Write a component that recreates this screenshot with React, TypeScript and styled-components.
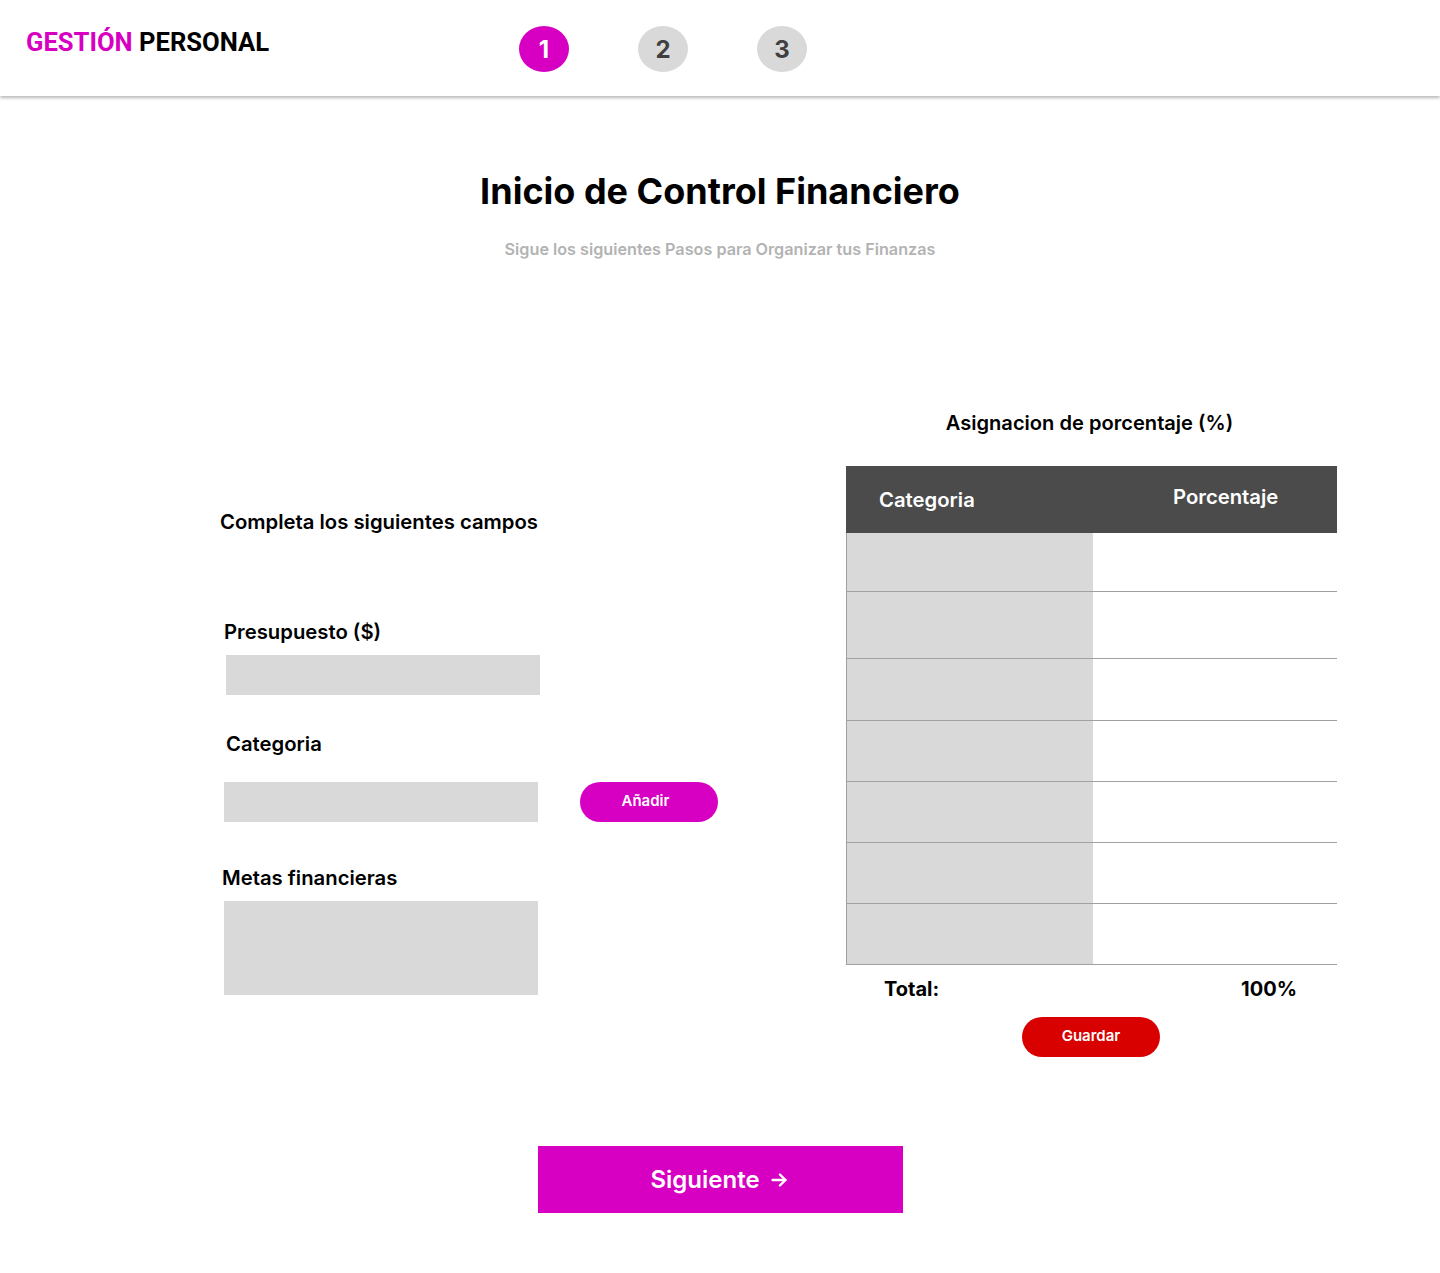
import React from "react";
import styled, { createGlobalStyle } from "styled-components";

const MAGENTA = "#d700c2";

const Global = createGlobalStyle`
  html, body { margin: 0; padding: 0; background: #ffffff; }
  body { font-family: Inter, "Noto Sans", sans-serif; color: #000; }
  * { box-sizing: border-box; }
`;

const Page = styled.div`
  width: 1440px;
  min-height: 1273px;
  display: flex;
  flex-direction: column;
  padding-bottom: 60px;
`;

const Header = styled.header`
  height: 96px;
  display: flex;
  align-items: flex-start;
  padding-left: 26px;
  box-shadow: 0 2px 3px rgba(0, 0, 0, 0.28);
  position: relative;
  z-index: 1;
`;

const Logo = styled.div`
  width: 493px;
  flex-shrink: 0;
  margin-top: 27px;
  font-family: Roboto, "Liberation Sans", sans-serif;
  font-weight: 700;
  font-size: 25.6px;
  line-height: 30px;
`;

const LogoAccent = styled.span`
  color: ${MAGENTA};
`;

const Steps = styled.div`
  display: flex;
  gap: 69px;
  margin-top: 26px;
`;

const Step = styled.div<{ $active?: boolean }>`
  width: 50px;
  height: 46px;
  border-radius: 50%;
  display: flex;
  align-items: center;
  justify-content: center;
  background: ${(p) => (p.$active ? MAGENTA : "#d9d9d9")};
  color: ${(p) => (p.$active ? "#ffffff" : "#3f3f3f")};
  font-family: Inter, sans-serif;
  font-weight: 700;
  font-size: 24px;
`;

const Intro = styled.section`
  display: flex;
  flex-direction: column;
  align-items: center;
  padding-top: 73px;
`;

const Title = styled.h1`
  margin: 0;
  font-size: 36px;
  line-height: 44px;
  font-weight: 700;
`;

const Subtitle = styled.p`
  margin: 26px 0 0;
  font-size: 16.2px;
  line-height: 20px;
  font-weight: 600;
  color: #b3b3b3;
`;

const Columns = styled.section`
  display: flex;
  align-items: flex-start;
  padding-left: 220px;
  margin-top: 152px;
`;

const FormColumn = styled.div`
  width: 626px;
  flex-shrink: 0;
  display: flex;
  flex-direction: column;
  align-items: flex-start;
  padding-top: 99px;
`;

const Label = styled.div<{ $indent?: number; $gap?: number }>`
  margin-left: ${(p) => p.$indent ?? 0}px;
  margin-top: ${(p) => p.$gap ?? 0}px;
  font-size: 20.3px;
  line-height: 24px;
  font-weight: 600;
`;

const Field = styled.div<{ $indent?: number; $height?: number; $gap?: number }>`
  margin-left: ${(p) => p.$indent ?? 0}px;
  margin-top: ${(p) => p.$gap ?? 0}px;
  width: 314px;
  height: ${(p) => p.$height ?? 40}px;
  background: #d9d9d9;
`;

const FieldRow = styled.div<{ $gap?: number }>`
  display: flex;
  align-items: center;
  gap: 42px;
  margin-top: ${(p) => p.$gap ?? 0}px;
  margin-left: 4px;
`;

const PillButton = styled.button<{ $color: string; $offsetX?: number }>`
  width: 138px;
  height: 40px;
  border: none;
  border-radius: 20px;
  background: ${(p) => p.$color};
  color: #ffffff;
  font-family: Inter, sans-serif;
  font-weight: 600;
  font-size: 15px;
  cursor: pointer;
  padding: 0 ${(p) => p.$offsetX ?? 0}px 4px 0;
`;

const TableColumn = styled.div`
  width: 491px;
  flex-shrink: 0;
  display: flex;
  flex-direction: column;
  align-items: center;
`;

const SectionHeading = styled.h2`
  margin: 0 4px 0 0;
  font-size: 20.1px;
  line-height: 24px;
  font-weight: 600;
`;

const Table = styled.div`
  width: 491px;
  margin-top: 31px;
  display: flex;
  flex-direction: column;
  border-bottom: 1px solid #a0a0a0;
`;

const HeadRow = styled.div`
  height: 67px;
  display: grid;
  grid-template-columns: 246px 245px;
  background: #4b4b4b;
  color: #ffffff;
`;

const HeadCell = styled.div<{ $pad: number; $shift?: number }>`
  display: flex;
  align-items: center;
  padding-left: ${(p) => p.$pad}px;
  padding-bottom: ${(p) => (p.$shift ?? 0) * 2}px;
  font-size: 20.3px;
  font-weight: 600;
`;

const BodyRow = styled.div<{ $height: number }>`
  height: ${(p) => p.$height}px;
  display: grid;
  grid-template-columns: 246px 245px;
  border-left: 1px solid #a0a0a0;
  border-right: 1px solid #a0a0a0;
  & + & {
    border-top: 1px solid #a0a0a0;
  }
`;

const GrayCell = styled.div`
  background: #d9d9d9;
`;

const WhiteCell = styled.div`
  background: #ffffff;
`;

const TotalRow = styled.div`
  width: 100%;
  display: flex;
  justify-content: space-between;
  padding: 0 40px 0 38px;
  margin-top: 12px;
  font-size: 20px;
  line-height: 24px;
  font-weight: 700;
`;

const SaveWrap = styled.div`
  margin: 16px 1px 0 0;
`;

const NextButton = styled.button`
  align-self: center;
  margin-top: 89px;
  width: 365px;
  height: 67px;
  border: none;
  background: ${MAGENTA};
  color: #ffffff;
  font-family: Inter, sans-serif;
  font-weight: 600;
  font-size: 24px;
  display: flex;
  align-items: center;
  justify-content: center;
  gap: 8px;
  padding: 0;
  cursor: pointer;
`;

const rowHeights = [58, 67, 62, 61, 61, 61, 61];

export default function App() {
  return (
    <>
      <Global />
      <Page>
        <Header>
          <Logo>
            <LogoAccent>GESTIÓN</LogoAccent> PERSONAL
          </Logo>
          <Steps>
            <Step $active>1</Step>
            <Step>2</Step>
            <Step>3</Step>
          </Steps>
        </Header>

        <Intro>
          <Title>Inicio de Control Financiero</Title>
          <Subtitle>Sigue los siguientes Pasos para Organizar tus Finanzas</Subtitle>
        </Intro>

        <Columns>
          <FormColumn>
            <Label>Completa los siguientes campos</Label>
            <Label $indent={4} $gap={86}>Presupuesto ($)</Label>
            <Field $indent={6} $gap={11} />
            <Label $indent={6} $gap={37}>Categoria</Label>
            <FieldRow $gap={26}>
              <Field />
              <PillButton $color={MAGENTA} $offsetX={7}>Añadir</PillButton>
            </FieldRow>
            <Label $indent={2} $gap={44}>Metas financieras</Label>
            <Field $indent={4} $gap={11} $height={94} />
          </FormColumn>

          <TableColumn>
            <SectionHeading>Asignacion de porcentaje (%)</SectionHeading>
            <Table>
              <HeadRow>
                <HeadCell $pad={33}>Categoria</HeadCell>
                <HeadCell $pad={81} $shift={3}>Porcentaje</HeadCell>
              </HeadRow>
              {rowHeights.map((h, i) => (
                <BodyRow key={i} $height={h}>
                  <GrayCell />
                  <WhiteCell />
                </BodyRow>
              ))}
            </Table>
            <TotalRow>
              <span>Total:</span>
              <span>100%</span>
            </TotalRow>
            <SaveWrap>
              <PillButton $color="#d90000">Guardar</PillButton>
            </SaveWrap>
          </TableColumn>
        </Columns>

        <NextButton>
          Siguiente
          <svg width="22" height="22" viewBox="0 0 24 24" fill="none" stroke="#ffffff" strokeWidth="2.6" strokeLinecap="round" strokeLinejoin="round">
            <path d="M5 12h14" />
            <path d="M13 6l6 6-6 6" />
          </svg>
        </NextButton>
      </Page>
    </>
  );
}
